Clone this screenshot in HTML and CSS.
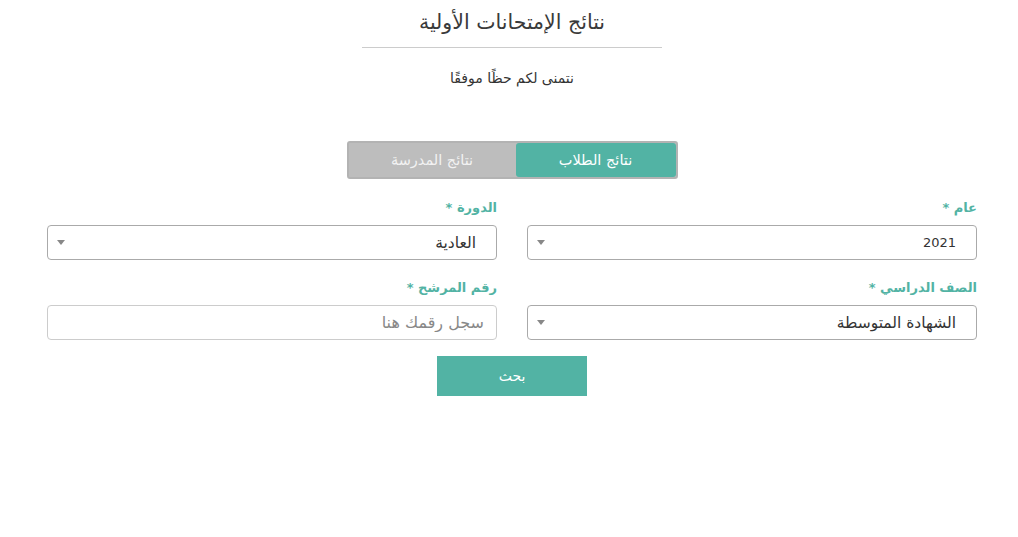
FILE: index.html
```html
<!DOCTYPE html>
<html lang="ar" dir="rtl">
<head>
<meta charset="UTF-8" />
<title>نتائج الإمتحانات الأولية</title>
<link rel="stylesheet" href="styles.css">
</head>
<body>
<div class="page">
  <header class="head">
    <h1>نتائج الإمتحانات الأولية</h1>
    <hr class="rule" />
    <p class="wish">نتمنى لكم حظًا موفقًا</p>
  </header>

  <div class="tabs">
    <button class="tab active" type="button">نتائج الطلاب</button>
    <button class="tab" type="button">نتائج المدرسة</button>
  </div>

  <form class="grid">
    <div class="field">
      <label>عام *</label>
      <div class="select"><span class="num">2021</span><i class="caret"></i></div>
    </div>
    <div class="field">
      <label>الدورة *</label>
      <div class="select"><span>العادية</span><i class="caret"></i></div>
    </div>
    <div class="field">
      <label>الصف الدراسي *</label>
      <div class="select"><span>الشهادة المتوسطة</span><i class="caret"></i></div>
    </div>
    <div class="field">
      <label>رقم المرشح *</label>
      <input type="text" class="input" placeholder="سجل رقمك هنا" />
    </div>
  </form>

  <div class="actions">
    <button class="search" type="button">بحث</button>
  </div>
</div>
</body>
</html>
```

FILE: styles.css
```css
body {
  margin: 0;
  font-family: "DejaVu Sans", "Noto Sans", sans-serif;
  color: #333;
  background: #fff;
}
.page {
  width: 930px;
  margin: 0 41px 0 47px;
}
.head {
  text-align: center;
  padding-top: 8px;
}
.head h1 {
  font-size: 20.5px;
  font-weight: normal;
  margin: 0;
  color: #3a3a3a;
  line-height: 28px;
}
.rule {
  width: 300px;
  margin: 11px auto 0 auto;
  border: none;
  border-top: 1px solid #ccc;
}
.wish {
  font-size: 14px;
  margin: 22px 0 0 0;
  color: #333;
}
.tabs {
  display: flex;
  width: 327px;
  margin: 55px auto 0 auto;
  background: #bdbdbd;
  border: 2px solid #b3b3b3;
  border-radius: 3px;
}
.tab {
  flex: 1;
  height: 34px;
  border: none;
  background: transparent;
  color: #f2f2f2;
  font-family: inherit;
  font-size: 14.5px;
  border-radius: 3px;
}
.tab.active {
  flex: 0 0 160px;
  background: #52b3a4;
  color: #fff;
}
.grid {
  display: grid;
  grid-template-columns: 1fr 1fr;
  column-gap: 30px;
  row-gap: 19px;
  margin-top: 20px;
}
.field label {
  display: block;
  color: #52b3a4;
  font-weight: bold;
  font-size: 13px;
  line-height: 18px;
  margin-bottom: 8px;
}
.select,
.input {
  box-sizing: border-box;
  height: 35px;
  width: 100%;
  border: 1px solid #aaa;
  border-radius: 4px;
  display: flex;
  align-items: center;
  justify-content: space-between;
  padding: 0 20px 0 9px;
  font-size: 15.5px;
  color: #333;
  font-family: inherit;
}
.select .num {
  font-size: 13px;
}
.input {
  border-color: #ccc;
  outline: none;
  padding-right: 12px;
  font-size: 16px;
}
.input::placeholder {
  color: #888;
}
.caret {
  width: 0;
  height: 0;
  border-left: 4px solid transparent;
  border-right: 4px solid transparent;
  border-top: 5px solid #888;
}
.actions {
  display: flex;
  justify-content: center;
  margin-top: 16px;
}
.search {
  width: 150px;
  height: 40px;
  border: none;
  background: #52b3a4;
  color: #fff;
  font-family: inherit;
  font-size: 14px;
}
```
